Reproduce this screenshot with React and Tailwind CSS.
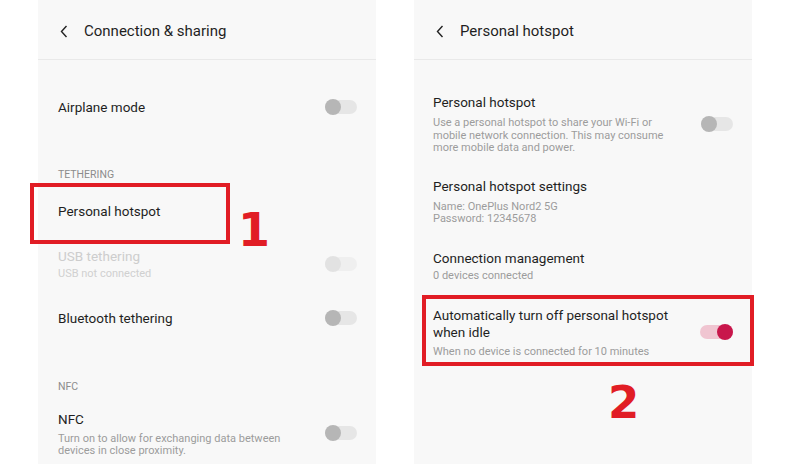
const Toggle = ({ state = "off" }) => {
  if (state === "on") {
    return (
      <div className="relative w-[33px] h-[16px] shrink-0">
        <div className="absolute left-0 right-0 top-[1px] h-[14px] rounded-full bg-[#f0c5d1]" />
        <div className="absolute right-0 top-0 w-[16px] h-[16px] rounded-full bg-[#c8164b]" />
      </div>
    );
  }
  const disabled = state === "disabled";
  return (
    <div className="relative w-[32px] h-[16px] shrink-0">
      <div
        className={`absolute left-0 right-0 top-[1px] h-[14px] rounded-full ${
          disabled ? "bg-[#efefef]" : "bg-[#e6e6e6]"
        }`}
      />
      <div
        className={`absolute left-0 top-0 w-[16px] h-[16px] rounded-full ${
          disabled ? "bg-[#e2e2e2]" : "bg-[#b6b6b6]"
        }`}
      />
    </div>
  );
};

const Header = ({ title }) => (
  <div className="h-[60px] border-b border-[#e9e9e9] flex items-center pl-[22px] pt-[3px] gap-[16px]">
    <svg width="8" height="13" viewBox="0 0 8 13" fill="none">
      <path d="M6.5 1 L1.5 6.5 L6.5 12" stroke="#222" strokeWidth="1.4" />
    </svg>
    <span className="text-[15px] text-[#1f1f1f] leading-none">{title}</span>
  </div>
);

const SectionLabel = ({ children, className = "" }) => (
  <div className={`h-[14px] leading-[14px] text-[10.5px] text-[#8c8c8c] ${className}`}>
    {children}
  </div>
);

const Title = ({ children, muted }) => (
  <div
    className={`text-[13.5px] leading-[18px] ${muted ? "text-[#cdcdcd]" : "text-[#1f1f1f]"}`}
  >
    {children}
  </div>
);

const Panel = ({ children, className = "" }) => (
  <div className={`w-[338px] h-[464px] bg-[#f8f8f8] shrink-0 ${className}`}>{children}</div>
);

export default function App() {
  return (
    <div
      className="relative w-[800px] h-[464px] bg-white flex overflow-hidden"
      style={{ fontFamily: "Roboto, 'Noto Sans', sans-serif" }}
    >
      <Panel className="ml-[38px]">
        <Header title="Connection & sharing" />
        <div className="pl-[20px] pr-[19px]">
          <div className="mt-[38px] flex items-center justify-between">
            <Title>Airplane mode</Title>
            <Toggle />
          </div>

          <SectionLabel className="mt-[52px]">TETHERING</SectionLabel>

          <div className="mt-[20px]">
            <Title>Personal hotspot</Title>
          </div>

          <div className="mt-[27px] flex items-center justify-between">
            <div>
              <Title muted>USB tethering</Title>
              <div className="mt-[3px] text-[11px] leading-[12px] text-[#d0d0d0]">
                USB not connected
              </div>
            </div>
            <Toggle state="disabled" />
          </div>

          <div className="mt-[29px] flex items-center justify-between">
            <Title>Bluetooth tethering</Title>
            <Toggle />
          </div>

          <SectionLabel className="mt-[53px]">NFC</SectionLabel>

          <div className="mt-[16px] flex items-center justify-between">
            <div className="w-[240px]">
              <Title>NFC</Title>
              <div className="mt-[5px] text-[11px] leading-[11.5px] text-[#9c9c9c]">
                Turn on to allow for exchanging data between devices in close proximity.
              </div>
            </div>
            <Toggle />
          </div>
        </div>
      </Panel>

      <Panel className="ml-[38px]">
        <Header title="Personal hotspot" />
        <div className="pl-[19px] pr-[19px]">
          <div className="mt-[33px] flex items-center justify-between">
            <div className="w-[240px]">
              <Title>Personal hotspot</Title>
              <div className="mt-[6px] text-[11px] leading-[12.5px] text-[#9c9c9c]">
                Use a personal hotspot to share your Wi-Fi or mobile network connection. This may
                consume more mobile data and power.
              </div>
            </div>
            <Toggle />
          </div>

          <div className="mt-[22px]">
            <Title>Personal hotspot settings</Title>
            <div className="mt-[6px] text-[11px] leading-[12px] text-[#9c9c9c]">
              <div>Name: OnePlus Nord2 5G</div>
              <div>Password: 12345678</div>
            </div>
          </div>

          <div className="mt-[24px]">
            <Title>Connection management</Title>
            <div className="mt-[3px] text-[11px] leading-[12px] text-[#9c9c9c]">
              0 devices connected
            </div>
          </div>

          <div className="mt-[25px] flex items-center justify-between">
            <div className="w-[250px]">
              <div className="text-[13.5px] leading-[17.5px] text-[#1f1f1f]">
                Automatically turn off personal hotspot when idle
              </div>
              <div className="mt-[4px] text-[11px] leading-[12px] text-[#9c9c9c]">
                When no device is connected for 10 minutes
              </div>
            </div>
            <Toggle state="on" />
          </div>
        </div>
      </Panel>

      <div className="absolute left-[30px] top-[183px] w-[200px] h-[61px] border-[4px] border-[#e11d25]" />
      <div
        className="absolute left-[238px] top-[207px] text-[46px] font-bold leading-none text-[#e11d25]"
        style={{ fontFamily: "'DejaVu Sans', sans-serif" }}
      >
        1
      </div>

      <div className="absolute left-[422px] top-[295px] w-[332px] h-[71px] border-[4px] border-[#e11d25]" />
      <div
        className="absolute left-[608px] top-[380px] text-[45px] font-bold leading-none text-[#e11d25]"
        style={{ fontFamily: "'DejaVu Sans', sans-serif" }}
      >
        2
      </div>
    </div>
  );
}
